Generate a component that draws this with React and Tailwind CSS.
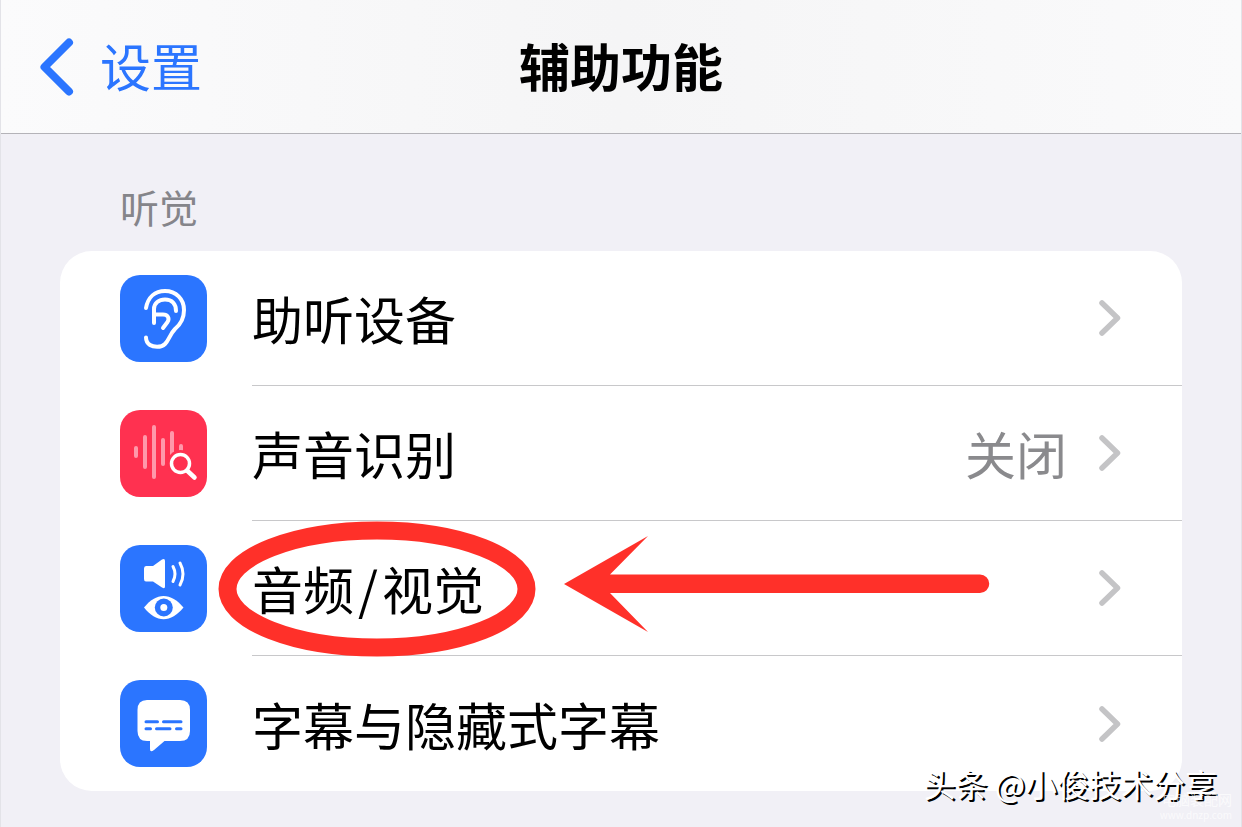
const BLUE = '#2b75ff';
const RED = '#ff3150';

function HearingIcon() {
  return (
    <svg viewBox="0 0 87 87" className="size-full" fill="none" stroke="white" strokeWidth="4" strokeLinecap="round" strokeLinejoin="round">
      <path d="M26 33C28 22 35 16 45 16C56 16 64 24 64 35C64 43 61 49 55 54C50 59 49 65 45 69C41 73 33 72 30 70C27 68 26 66 26 62.5" />
      <path d="M34 48V34C34 28 39 24.500 45 24.500C52 24.500 56 29 56 36" />
      <path d="M34 39.500H43C47.500 39.500 50 43 47.500 47L43 53" />
    </svg>
  );
}

function SoundIcon() {
  return (
    <svg viewBox="0 0 87 87" className="size-full" fill="none" strokeLinecap="round">
      <g stroke="#ff98aa" strokeWidth="4">
        <path d="M16 38V46M25 27V57M34 17V67M43 30V54M52 23V49M61 36V46" />
      </g>
      <circle cx="60.500" cy="53.500" r="13.500" fill={RED} />
      <circle cx="60.500" cy="53.500" r="9" stroke="white" strokeWidth="3.500" />
      <path d="M67 60.500L74.500 67.500" stroke="white" strokeWidth="4.500" />
    </svg>
  );
}

function AudioVisualIcon() {
  return (
    <svg viewBox="0 0 87 87" className="size-full" fill="none">
      <path
        d="M26 21H33L42 14.500Q45 13 45 16V41.500Q45 44.500 42 42.500L33 36.500H26Q24 36.500 24 34V23.500Q24 21 26 21Z"
        fill="white"
      />
      <g stroke="white" strokeWidth="3" strokeLinecap="round">
        <path d="M53 21.500Q57 29 53 36.500" />
        <path d="M60 18Q66 29 60 40" />
      </g>
      <path d="M24 62.500C36 47 51 47 63.500 62.500C51 78 36 78 24 62.500Z" fill="white" />
      <circle cx="43.800" cy="62.500" r="9" fill={BLUE} />
      <circle cx="43.800" cy="62.500" r="3.500" fill="white" />
    </svg>
  );
}

function CaptionsIcon() {
  return (
    <svg viewBox="0 0 87 87" className="size-full" fill="none">
      <path
        d="M27 20H60Q70 20 70 30V51Q70 61 60 61H44.500L34 70Q30 73 30 69V61H27Q17.500 61 17.500 51V30Q17.500 20 27 20Z"
        fill="white"
      />
      <path
        d="M26 41.800H37.500M43.500 41.800H61M26 48.800H30.500M36.500 48.800H50M56.500 48.800H61"
        stroke={BLUE}
        strokeWidth="3"
        strokeLinecap="round"
      />
    </svg>
  );
}

const ROWS = [
  { id: 'hearing', label: '助听设备', icon: HearingIcon, color: 'bg-[#2b75ff]' },
  { id: 'sound', label: '声音识别', icon: SoundIcon, color: 'bg-[#ff3150]', value: '关闭' },
  {
    id: 'audio-visual',
    label: <>音频<span className="mx-1">/</span>视觉</>,
    icon: AudioVisualIcon,
    color: 'bg-[#2b75ff]',
    marked: true,
  },
  { id: 'captions', label: '字幕与隐藏式字幕', icon: CaptionsIcon, color: 'bg-[#2b75ff]' },
];

function Chevron() {
  return (
    <svg viewBox="0 0 22 36" className="w-[22px] h-9 shrink-0" fill="none">
      <path d="M3 3L18.500 18L3 33" stroke="#c4c4c6" strokeWidth="5.500" strokeLinecap="round" strokeLinejoin="round" />
    </svg>
  );
}

// Hand-drawn ring and arrow laid over the highlighted row
function Marker() {
  return (
    <>
      <svg viewBox="0 0 318 136" className="absolute left-[158px] top-0 w-[318px] h-[136px] pointer-events-none" fill="none">
        <ellipse cx="159" cy="68" rx="149.500" ry="58.500" stroke="#ff3029" strokeWidth="18" />
      </svg>
      <svg viewBox="0 0 426 97" className="absolute left-[504px] top-[14px] w-[426px] h-[97px] pointer-events-none">
        <path d="M0 49L84 1L46 39.500H416A9 9 0 0 1 416 58H46L84 97Z" fill="#ff3029" />
      </svg>
    </>
  );
}

function SettingRow({ row, last }) {
  const Icon = row.icon;

  return (
    <li className="relative">
      <button className="w-full flex items-center pl-[60px] text-left">
        <span className={`size-[87px] rounded-[20px] shrink-0 ${row.color}`}>
          <Icon />
        </span>
        <span
          className={`ml-[45px] flex-1 h-[135px] flex items-center justify-between pr-[61px] ${
            last ? '' : 'border-b border-[#c8c8ca]'
          }`}
        >
          <span className="text-[51px] leading-[60px] text-black">{row.label}</span>
          <span className="flex items-center gap-8">
            {row.value && <span className="text-[51px] leading-[60px] text-[#8a8a8d]">{row.value}</span>}
            <Chevron />
          </span>
        </span>
      </button>
      {row.marked && <Marker />}
    </li>
  );
}

export default function App() {
  return (
    <div className="relative min-h-screen bg-[#f1f0f6] border-x border-[#e3e3e8] font-['Noto_Sans_CJK_SC','Liberation_Sans',sans-serif]">
      <header className="grid grid-cols-[1fr_auto_1fr] items-center h-[134px] px-[39px] border-b border-[#b4b3b8] bg-linear-to-r from-[#fbfbfc] via-[#f5f5f6] to-[#fafafb]">
        <a href="#settings" className="flex items-center gap-[26px] text-[#2b75ff]">
          <svg viewBox="0 0 34 58" className="w-[34px] h-[58px]" fill="none">
            <path d="M29 4.500L4.500 29L29 53.500" stroke="currentColor" strokeWidth="8" strokeLinecap="round" strokeLinejoin="round" />
          </svg>
          <span className="pb-1 text-[51px] leading-[60px]">设置</span>
        </a>
        <h1 className="pb-1 text-[51px] leading-[60px] font-bold text-black">辅助功能</h1>
      </header>

      <main className="px-[59px] pt-12 pb-9">
        <h2 className="px-[60px] text-[39px] leading-[48px] text-[#85858a]">听觉</h2>
        <ul className="mt-[21px] bg-white rounded-[32px]">
          {ROWS.map((row, i) => (
            <SettingRow key={row.id} row={row} last={i === ROWS.length - 1} />
          ))}
        </ul>
      </main>

      <p className="absolute right-6 bottom-5 text-[32px] leading-[48px] text-white [text-shadow:2px_2px_0_black]">
        头条 @小俊技术分享
      </p>
      <div className="absolute right-[9px] bottom-1 text-right text-white/70">
        <p className="text-[14px] leading-4">电脑装配网</p>
        <p className="text-[10px] leading-4">www.dnzp.com</p>
      </div>
    </div>
  );
}
